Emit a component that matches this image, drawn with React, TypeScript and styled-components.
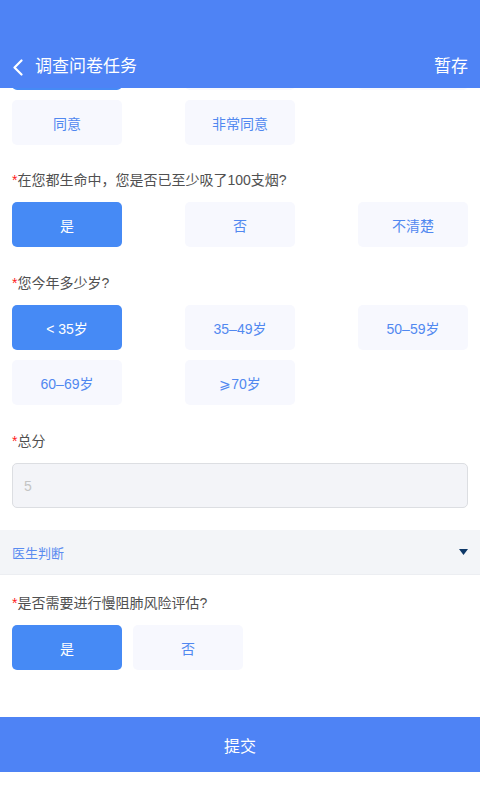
import React from 'react'
import styled, { createGlobalStyle } from 'styled-components'

const GlobalStyle = createGlobalStyle`
  html, body {
    margin: 0;
    padding: 0;
    background: #ffffff;
  }
  body {
    font-family: "Liberation Sans", "Noto Sans CJK SC", sans-serif;
    -webkit-font-smoothing: antialiased;
  }
  * {
    box-sizing: border-box;
  }
`

const Page = styled.div`
  width: 100%;
  min-height: 100vh;
  display: flex;
  flex-direction: column;
  background: #ffffff;
`

const Header = styled.header`
  background: #4e83f5;
  padding-top: 46px;
  position: relative;
  z-index: 2;
`

const NavBar = styled.div`
  height: 42px;
  display: flex;
  align-items: center;
  padding: 0 12px;
  color: #ffffff;
`

const BackButton = styled.button`
  border: 0;
  background: transparent;
  padding: 0;
  width: 14px;
  height: 20px;
  display: flex;
  align-items: center;
  cursor: pointer;
`

const Title = styled.h1`
  margin: 0 0 0 9px;
  font-size: 17px;
  font-weight: 400;
  line-height: 42px;
  flex: 1;
`

const SaveLink = styled.span`
  font-size: 17px;
  line-height: 42px;
`

const Content = styled.main`
  overflow: hidden;
  flex: 1;
`

const ScrollInner = styled.div<{ $offset: number }>`
  margin-top: ${({ $offset }) => -$offset}px;
`

const Block = styled.section<{ $top?: number }>`
  padding: ${({ $top = 26 }) => $top}px 12px 0;
`

const Label = styled.div`
  font-size: 14px;
  line-height: 20px;
  color: #505050;
  margin-bottom: 12px;
`

const Star = styled.span`
  color: #ff2020;
`

const OptionGrid = styled.div<{ $inline?: boolean }>`
  display: ${({ $inline }) => ($inline ? 'flex' : 'grid')};
  grid-template-columns: repeat(3, 110px);
  justify-content: space-between;
  row-gap: 10px;
  ${({ $inline }) => ($inline ? 'justify-content: flex-start; gap: 11px;' : '')}
`

const Option = styled.button<{ $active?: boolean }>`
  width: 110px;
  height: 45px;
  border: 0;
  border-radius: 5px;
  font-family: inherit;
  font-size: 14px;
  background: ${({ $active }) => ($active ? '#468af5' : '#f7f8fe')};
  color: ${({ $active }) => ($active ? '#ffffff' : '#5188f0')};
  cursor: pointer;
`

const ScoreInput = styled.input`
  display: block;
  width: 100%;
  height: 45px;
  border: 1px solid #dcdee2;
  border-radius: 5px;
  background: #f3f4f8;
  padding: 0 11px;
  font-family: inherit;
  font-size: 14px;
  color: #c4c4c4;
  &::placeholder {
    color: #c4c4c4;
  }
`

const SectionBar = styled.div`
  margin-top: 22px;
  height: 45px;
  background: #f3f5f8;
  border-bottom: 1px solid #eceef2;
  display: flex;
  align-items: center;
  justify-content: space-between;
  padding: 0 12px;
`

const SectionTitle = styled.span`
  font-size: 13px;
  color: #5a8cf0;
`

const Footer = styled.button`
  margin-top: 47px;
  width: 100%;
  height: 55px;
  border: 0;
  background: #4e83f5;
  color: #ffffff;
  font-family: inherit;
  font-size: 16px;
  cursor: pointer;
`

const BottomSpace = styled.div`
  height: 28px;
  background: #ffffff;
`

type Question = {
  label: string
  options: string[]
  selected?: number
  top?: number
}

const questions: Question[] = [
  {
    label: '在您都生命中，您是否已至少吸了100支烟?',
    options: ['是', '否', '不清楚'],
    selected: 0,
    top: 25
  },
  {
    label: '您今年多少岁?',
    options: ['< 35岁', '35–49岁', '50–59岁', '60–69岁', '⩾70岁'],
    selected: 0
  }
]

function Options ({ options, selected, inline }: { options: string[], selected?: number, inline?: boolean }) {
  return (
    <OptionGrid $inline={inline}>
      {options.map((o, i) => (
        <Option key={o} $active={i === selected}>{o}</Option>
      ))}
    </OptionGrid>
  )
}

export default function App () {
  return (
    <>
      <GlobalStyle />
      <Page>
        <Header>
          <NavBar>
            <BackButton aria-label="返回">
              <svg width="11" height="17" viewBox="0 0 11 17" fill="none">
                <path d="M9.5 1.5L2.5 8.5L9.5 15.5" stroke="#ffffff" strokeWidth="2.2" strokeLinecap="round" strokeLinejoin="round" />
              </svg>
            </BackButton>
            <Title>调查问卷任务</Title>
            <SaveLink>暂存</SaveLink>
          </NavBar>
        </Header>

        <Content>
          <ScrollInner $offset={43}>
            <Block $top={0}>
              <Options options={['非常不同意', '不同意', '一般', '同意', '非常同意']} selected={0} />
            </Block>

            {questions.map(q => (
              <Block key={q.label} $top={q.top}>
                <Label><Star>*</Star>{q.label}</Label>
                <Options options={q.options} selected={q.selected} />
              </Block>
            ))}

            <Block>
              <Label><Star>*</Star>总分</Label>
              <ScoreInput placeholder="5" readOnly />
            </Block>

            <SectionBar>
              <SectionTitle>医生判断</SectionTitle>
              <svg width="9" height="6" viewBox="0 0 9 6">
                <path d="M0 0H9L4.5 6Z" fill="#0d3868" />
              </svg>
            </SectionBar>

            <Block $top={18}>
              <Label><Star>*</Star>是否需要进行慢阻肺风险评估?</Label>
              <Options options={['是', '否']} selected={0} inline />
            </Block>

            <Footer>提交</Footer>
            <BottomSpace />
          </ScrollInner>
        </Content>
      </Page>
    </>
  )
}
